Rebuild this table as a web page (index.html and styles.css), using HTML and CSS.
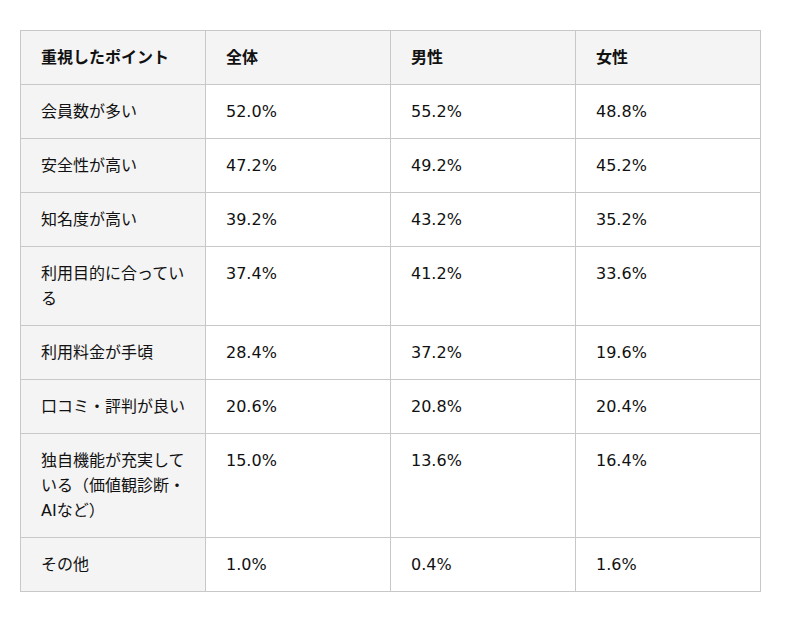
FILE: index.html
```html
<!DOCTYPE html>
<html lang="ja">
<head>
<meta charset="utf-8">
<link rel="stylesheet" href="styles.css">
</head>
<body>
<div class="wrap">
<table class="tbl">
<thead>
<tr><th>重視したポイント</th><th>全体</th><th>男性</th><th>女性</th></tr>
</thead>
<tbody>
<tr><td>会員数が多い</td><td>52.0%</td><td>55.2%</td><td>48.8%</td></tr>
<tr><td>安全性が高い</td><td>47.2%</td><td>49.2%</td><td>45.2%</td></tr>
<tr><td>知名度が高い</td><td>39.2%</td><td>43.2%</td><td>35.2%</td></tr>
<tr><td>利用目的に合っている</td><td>37.4%</td><td>41.2%</td><td>33.6%</td></tr>
<tr><td>利用料金が手頃</td><td>28.4%</td><td>37.2%</td><td>19.6%</td></tr>
<tr><td>口コミ・評判が良い</td><td>20.6%</td><td>20.8%</td><td>20.4%</td></tr>
<tr><td>独自機能が充実している（価値観診断・AIなど）</td><td>15.0%</td><td>13.6%</td><td>16.4%</td></tr>
<tr><td>その他</td><td>1.0%</td><td>0.4%</td><td>1.6%</td></tr>
</tbody>
</table>
</div>
</body>
</html>
```
FILE: styles.css
```css
html, body {
  margin: 0;
  padding: 0;
  background: #ffffff;
}
body {
  font-family: "DejaVu Sans", "Noto Sans CJK JP", sans-serif;
  font-size: 16px;
  color: #111111;
}
.wrap {
  padding: 30px 20px;
}
.tbl {
  width: 741px;
  table-layout: fixed;
  border-collapse: collapse;
  border: 1px solid #dddddd;
}
.tbl th,
.tbl td {
  border: 1px solid #c8c8c8;
  padding: 14px 20px;
  line-height: 25px;
  text-align: left;
  vertical-align: top;
  font-weight: normal;
}
.tbl th {
  font-weight: bold;
  background: #f4f4f4;
}
.tbl td:first-child {
  background: #f4f4f4;
}
```
